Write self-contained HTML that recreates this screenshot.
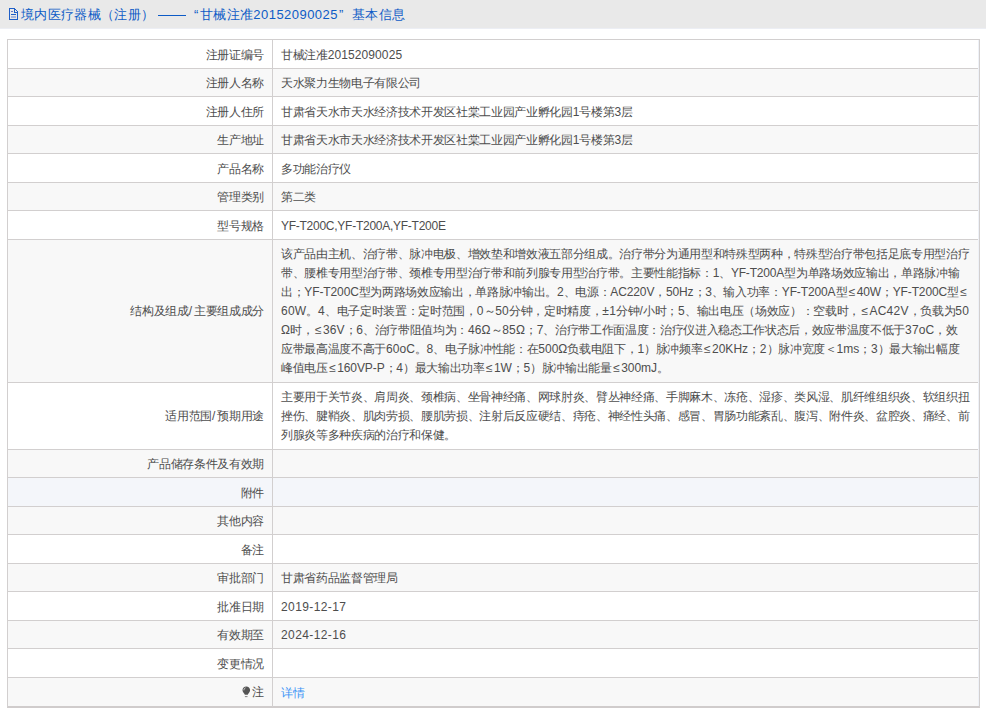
<!DOCTYPE html>
<html><head><meta charset="utf-8">
<style>
html,body{margin:0;padding:0;background:#fff;width:986px;height:717px;overflow:hidden;position:relative;font-family:"Liberation Sans",sans-serif;}
.hd{position:absolute;left:0;top:0;width:986px;height:28px;background:#e9e9e9;}
.t{position:absolute;top:1px;height:28px;line-height:28px;font-size:13px;letter-spacing:0.333px;color:#0d5bc6;white-space:nowrap;}
.ico{position:absolute;left:8px;top:8px;width:11px;height:13px;}
.tb{position:absolute;left:7px;top:39px;width:971px;height:666px;border:1px solid #d2cfcf;border-bottom:2px solid #d0cccc;}
.r{position:absolute;left:8px;width:971px;border-top:1px solid #d2cfcf;box-sizing:border-box;}
.g{background:#f8f8f8;}
.b{background:#f4f6fa;}
.lb{position:absolute;left:8px;width:256px;text-align:right;font-size:12px;letter-spacing:-0.333px;line-height:19px;color:#4d4d4d;white-space:nowrap;}
.vl{position:absolute;left:281px;font-size:12px;letter-spacing:-0.333px;line-height:19px;color:#4d4d4d;white-space:nowrap;}
.dv{position:absolute;left:272px;top:39px;width:1px;height:668px;background:#d2cfcf;}
.le{display:inline-block;width:9.5px;text-align:center;letter-spacing:0}
.bulb{display:inline-block;width:9px;height:12px;vertical-align:-2px;margin-right:1px}
a{color:#3a94f6;text-decoration:none;}
</style></head><body>
<div class="hd">
<svg style="position:absolute;left:0;top:0" width="24" height="28" viewBox="0 0 24 28" shape-rendering="crispEdges"><g fill="#1f5fc8"><rect x="9" y="8" width="1" height="12"/><rect x="9" y="19" width="9" height="1"/><rect x="17" y="12" width="1" height="8"/><rect x="9" y="8" width="5" height="1"/><rect x="14" y="8" width="1" height="4"/><rect x="14" y="12" width="4" height="1"/><rect x="15" y="9" width="1" height="1"/><rect x="16" y="10" width="1" height="1"/><rect x="17" y="11" width="1" height="1"/><rect x="11" y="11" width="2" height="1" fill="#6a78c8"/><rect x="11" y="14" width="5" height="1"/><rect x="11" y="16" width="5" height="2" fill="#a9b6da"/></g></svg>
<div class="t" style="left:21px">境内医疗器械（注册）</div>
<div style="position:absolute;left:158px;top:15px;width:28px;height:1px;background:#0d5bc6"></div>
<div class="t" style="left:194px">“</div>
<div class="t" style="left:200px">甘械注准<span style="letter-spacing:0.46px">20152090025</span></div>
<div class="t" style="left:339px">”</div>
<div class="t" style="left:352px">基本信息</div>
</div>
<div class="tb"></div>
<div style="position:absolute;left:0;top:28px;width:986px;height:1px;background:#eceef4"></div>
<div class="r" style="top:39px;height:29px"></div>
<div class="lb" style="top:45.50px">注册证编号</div>
<div class="vl" style="top:45.50px">甘械注准<span class="l" style="letter-spacing:0.1px">20152090025</span></div>
<div class="r g" style="top:68px;height:28px"></div>
<div class="lb" style="top:74.00px">注册人名称</div>
<div class="vl" style="top:74.00px">天水聚力生物电子有限公司</div>
<div class="r" style="top:96px;height:29px"></div>
<div class="lb" style="top:102.50px">注册人住所</div>
<div class="vl" style="top:102.50px">甘肃省天水市天水经济技术开发区社棠工业园产业孵化园<span class="l" style="letter-spacing:0.1px">1</span>号楼第<span class="l" style="letter-spacing:0.1px">3</span>层</div>
<div class="r g" style="top:125px;height:28px"></div>
<div class="lb" style="top:131.00px">生产地址</div>
<div class="vl" style="top:131.00px">甘肃省天水市天水经济技术开发区社棠工业园产业孵化园<span class="l" style="letter-spacing:0.1px">1</span>号楼第<span class="l" style="letter-spacing:0.1px">3</span>层</div>
<div class="r" style="top:153px;height:29px"></div>
<div class="lb" style="top:159.50px">产品名称</div>
<div class="vl" style="top:159.50px">多功能治疗仪</div>
<div class="r g" style="top:182px;height:28px"></div>
<div class="lb" style="top:188.00px">管理类别</div>
<div class="vl" style="top:188.00px">第二类</div>
<div class="r" style="top:210px;height:29px"></div>
<div class="lb" style="top:216.50px">型号规格</div>
<div class="vl" style="top:216.50px"><span class="l" style="letter-spacing:-0.26px">YF-T200C,YF-T200A,YF-T200E</span></div>
<div class="r g" style="top:239px;height:143px"></div>
<div class="lb" style="top:301.50px">结构及组成<span style="letter-spacing:2px">/</span>主要组成成分</div>
<div class="vl" style="top:244.50px">该产品由主机、治疗带、脉冲电极、增效垫和增效液五部分组成。治疗带分为通用型和特殊型两种，特殊型治疗带包括足底专用型治疗</div>
<div class="vl" style="top:263.50px">带、腰椎专用型治疗带、颈椎专用型治疗带和前列腺专用型治疗带。主要性能指标：<span class="l" style="letter-spacing:-0.17px">1</span>、<span class="l" style="letter-spacing:-0.17px">YF-T200A</span>型为单路场效应输出，单路脉冲输</div>
<div class="vl" style="top:282.50px">出；<span class="l" style="letter-spacing:-0.12px">YF-T200C</span>型为两路场效应输出，单路脉冲输出。<span class="l" style="letter-spacing:-0.12px">2</span>、电源：<span class="l" style="letter-spacing:-0.12px">AC220V</span>，<span class="l" style="letter-spacing:-0.12px">50Hz</span>；<span class="l" style="letter-spacing:-0.12px">3</span>、输入功率：<span class="l" style="letter-spacing:-0.12px">YF-T200A</span>型<span class="le">≤</span><span class="l" style="letter-spacing:-0.12px">40W</span>；<span class="l" style="letter-spacing:-0.12px">YF-T200C</span>型<span class="le">≤</span></div>
<div class="vl" style="top:301.50px"><span class="l" style="letter-spacing:0.23px">60W</span>。<span class="l" style="letter-spacing:0.23px">4</span>、电子定时装置：定时范围，<span class="l" style="letter-spacing:0.23px">0</span>～<span class="l" style="letter-spacing:0.23px">50</span>分钟，定时精度，<span class="l" style="letter-spacing:0.23px">±1</span>分钟<span class="l" style="letter-spacing:0.23px">/</span>小时；<span class="l" style="letter-spacing:0.23px">5</span>、输出电压（场效应）：空载时，<span class="le">≤</span><span class="l" style="letter-spacing:0.23px">AC42V</span>，负载为<span class="l" style="letter-spacing:0.23px">50</span></div>
<div class="vl" style="top:320.50px"><span class="l" style="letter-spacing:0.1px">Ω</span>时，<span class="le">≤</span><span class="l" style="letter-spacing:0.1px">36V</span>；<span class="l" style="letter-spacing:0.1px">6</span>、治疗带阻值均为：<span class="l" style="letter-spacing:0.1px">46Ω</span>～<span class="l" style="letter-spacing:0.1px">85Ω</span>；<span class="l" style="letter-spacing:0.1px">7</span>、治疗带工作面温度：治疗仪进入稳态工作状态后，效应带温度不低于<span class="l" style="letter-spacing:0.1px">37oC</span>，效</div>
<div class="vl" style="top:339.50px">应带最高温度不高于<span class="l" style="letter-spacing:0.03px">60oC</span>。<span class="l" style="letter-spacing:0.03px">8</span>、电子脉冲性能：在<span class="l" style="letter-spacing:0.03px">500Ω</span>负载电阻下，<span class="l" style="letter-spacing:0.03px">1</span>）脉冲频率<span class="le">≤</span><span class="l" style="letter-spacing:0.03px">20KHz</span>；<span class="l" style="letter-spacing:0.03px">2</span>）脉冲宽度＜<span class="l" style="letter-spacing:0.03px">1ms</span>；<span class="l" style="letter-spacing:0.03px">3</span>）最大输出幅度</div>
<div class="vl" style="top:358.50px">峰值电压<span class="le">≤</span><span class="l" style="letter-spacing:-0.09px">160VP-P</span>；<span class="l" style="letter-spacing:-0.09px">4</span>）最大输出功率<span class="le">≤</span><span class="l" style="letter-spacing:-0.09px">1W</span>；<span class="l" style="letter-spacing:-0.09px">5</span>）脉冲输出能量<span class="le">≤</span><span class="l" style="letter-spacing:-0.09px">300mJ</span>。</div>
<div class="r" style="top:382px;height:67px"></div>
<div class="lb" style="top:406.50px">适用范围<span style="letter-spacing:2px">/</span>预期用途</div>
<div class="vl" style="top:387.50px">主要用于关节炎、肩周炎、颈椎病、坐骨神经痛、网球肘炎、臂丛神经痛、手脚麻木、冻疮、湿疹、类风湿、肌纤维组织炎、软组织扭</div>
<div class="vl" style="top:406.50px">挫伤、腱鞘炎、肌肉劳损、腰肌劳损、注射后反应硬结、痔疮、神经性头痛、感冒、胃肠功能紊乱、腹泻、附件炎、盆腔炎、痛经、前</div>
<div class="vl" style="top:425.50px">列腺炎等多种疾病的治疗和保健。</div>
<div class="r g" style="top:449px;height:28px"></div>
<div class="lb" style="top:455.00px">产品储存条件及有效期</div>
<div class="r b" style="top:477px;height:29px"></div>
<div class="lb" style="top:483.50px">附件</div>
<div class="r g" style="top:506px;height:28px"></div>
<div class="lb" style="top:512.00px">其他内容</div>
<div class="r" style="top:534px;height:29px"></div>
<div class="lb" style="top:540.50px">备注</div>
<div class="r g" style="top:563px;height:28px"></div>
<div class="lb" style="top:569.00px">审批部门</div>
<div class="vl" style="top:569.00px">甘肃省药品监督管理局</div>
<div class="r" style="top:591px;height:29px"></div>
<div class="lb" style="top:597.50px">批准日期</div>
<div class="vl" style="top:597.50px"><span class="l" style="letter-spacing:0.4px">2019-12-17</span></div>
<div class="r g" style="top:620px;height:28px"></div>
<div class="lb" style="top:626.00px">有效期至</div>
<div class="vl" style="top:626.00px"><span class="l" style="letter-spacing:0.4px">2024-12-16</span></div>
<div class="r" style="top:648px;height:29px"></div>
<div class="lb" style="top:654.50px">变更情况</div>
<div class="r g" style="top:677px;height:29px"></div>
<div class="lb" style="top:682.50px"><svg class="bulb" viewBox="0 0 9 12"><path d="M4.3 0.4C2.2 0.4 0.5 2 0.5 4.1c0 1.4.7 2.4 1.4 3.1.5.5.8 1 .9 1.6h3c.1-.6.4-1.1.9-1.6.7-.7 1.4-1.7 1.4-3.1C8.1 2 6.4.4 4.3.4z" fill="#555"/><path d="M1.9 4.3c0-1.3.7-2.2 1.6-2.5" stroke="#f0f0f0" stroke-width=".8" fill="none"/><rect x="2.9" y="10.2" width="2.6" height="0.9" fill="#777"/></svg>注</div>
<div class="vl" style="top:683.50px"><a>详情</a></div>
<div class="dv"></div>
<div style="position:absolute;left:978px;top:40px;width:1px;height:666px;background:#eef1f7"></div>
</body></html>
